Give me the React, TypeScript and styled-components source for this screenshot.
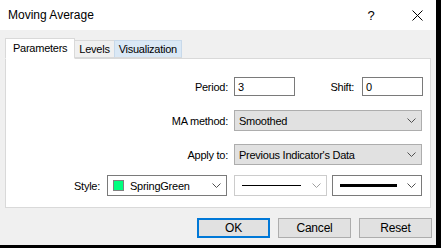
import React from 'react';
import styled, { createGlobalStyle } from 'styled-components';

const GlobalStyle = createGlobalStyle`
  html, body {
    margin: 0;
    padding: 0;
    background: #000;
  }
  body {
    font-family: 'Liberation Sans', Arial, sans-serif;
    font-size: 11px;
    color: #000;
  }
`;

const StyledScreen = styled.div({
  width: 441,
  height: 248,
  background: '#000',
  overflow: 'hidden',
});

const StyledWindow = styled.div({
  width: 436,
  height: 245,
  background: '#f0f0f0',
  display: 'flex',
  flexDirection: 'column',
});

const StyledTitleBar = styled.div({
  height: 30,
  background: '#fff',
  display: 'flex',
  alignItems: 'center',
  flexShrink: 0,
});

const StyledTitle = styled.div({
  flex: 1,
  paddingLeft: 8,
  paddingBottom: 1,
  fontSize: 12,
});

const StyledCaptionButton = styled.div<{ $width: number }>(({ $width }) => ({
  width: $width,
  height: 30,
  display: 'flex',
  alignItems: 'center',
  justifyContent: 'center',
  fontSize: 13,
}));

const StyledBody = styled.div({
  flex: 1,
  padding: '7px 5px 0 5px',
  display: 'flex',
  flexDirection: 'column',
  letterSpacing: '-0.25px',
});

const StyledTabs = styled.div({
  display: 'flex',
  alignItems: 'flex-end',
  height: 21,
  position: 'relative',
  zIndex: 1,
});

const StyledTab = styled.div<{ $active?: boolean; $hover?: boolean }>(({ $active, $hover }) => ({
  height: $active ? 21 : 18,
  padding: $active ? '0 7px 2px 7px' : '0 4px',
  display: 'flex',
  alignItems: 'center',
  boxSizing: 'border-box',
  background: $active ? '#fff' : $hover ? '#dae8f5' : '#f0f0f0',
  border: `1px solid ${$hover ? '#c8d9ea' : '#d9d9d9'}`,
  borderBottom: $active ? '1px solid #fff' : '1px solid #d9d9d9',
  marginLeft: $active ? 0 : -1,
  marginBottom: $active ? -1 : 0,
}));

const StyledPanel = styled.div({
  height: 150,
  background: '#fff',
  border: '1px solid #d9d9d9',
  boxSizing: 'border-box',
  paddingTop: 18,
  display: 'flex',
  flexDirection: 'column',
});

const StyledRow = styled.div<{ $gap: number }>(({ $gap }) => ({
  display: 'flex',
  alignItems: 'center',
  marginBottom: $gap,
}));

const StyledLabel = styled.div<{ $width: number; $space: number }>(({ $width, $space }) => ({
  width: $width,
  marginRight: $space,
  textAlign: 'right',
  flexShrink: 0,
}));

const StyledInput = styled.div({
  width: 61,
  height: 19,
  boxSizing: 'border-box',
  border: '1px solid #7a7a7a',
  background: '#fff',
  paddingLeft: 3,
  display: 'flex',
  alignItems: 'center',
});

const StyledSelect = styled.div({
  width: 188,
  height: 21,
  boxSizing: 'border-box',
  border: '1px solid #adadad',
  background: '#e1e1e1',
  paddingLeft: 4,
  paddingRight: 5,
  display: 'flex',
  alignItems: 'center',
});

const StyledSelectText = styled.div({
  flex: 1,
});

const StyledCombo = styled.div<{ $width: number; $space: number; $disabled?: boolean }>(
  ({ $width, $space, $disabled }) => ({
    width: $width,
    marginRight: $space,
    height: 21,
    boxSizing: 'border-box',
    border: `1px solid ${$disabled ? '#cccccc' : '#7a7a7a'}`,
    background: '#fff',
    display: 'flex',
    alignItems: 'center',
    paddingLeft: 5,
    paddingRight: 5,
    flexShrink: 0,
  }),
);

const StyledSwatch = styled.div({
  width: 11,
  height: 11,
  boxSizing: 'border-box',
  border: '1px solid #808080',
  background: '#00ff7f',
  marginRight: 6,
});

const StyledLine = styled.div<{ $weight: number; $length: number }>(({ $weight, $length }) => ({
  width: $length,
  height: $weight,
  background: '#000',
  marginLeft: 2,
}));

const StyledSpacer = styled.div({
  flex: 1,
});

const StyledButtonRow = styled.div({
  display: 'flex',
  justifyContent: 'flex-end',
  gap: 8,
  marginTop: 10,
  marginRight: -1,
});

const StyledButton = styled.div<{ $default?: boolean }>(({ $default }) => ({
  width: 73,
  height: 20,
  boxSizing: 'border-box',
  background: '#e1e1e1',
  border: $default ? '2px solid #0078d7' : '1px solid #adadad',
  display: 'flex',
  alignItems: 'center',
  justifyContent: 'center',
  fontSize: 12,
  letterSpacing: '-0.2px',
}));

const Chevron: React.FC<{ color?: string }> = ({ color = '#505050' }) => (
  <svg width="9" height="5" viewBox="0 0 9 5">
    <polyline points="0.5,0.5 4.5,4.5 8.5,0.5" fill="none" stroke={color} strokeWidth="1" />
  </svg>
);

const CloseIcon: React.FC = () => (
  <svg width="11" height="11" viewBox="0 0 11 11">
    <line x1="0.5" y1="0.5" x2="10.5" y2="10.5" stroke="#000" strokeWidth="1" />
    <line x1="10.5" y1="0.5" x2="0.5" y2="10.5" stroke="#000" strokeWidth="1" />
  </svg>
);

const App: React.FunctionComponent = () => (
  <StyledScreen>
    <GlobalStyle />
    <StyledWindow>
      <StyledTitleBar>
        <StyledTitle>Moving Average</StyledTitle>
        <StyledCaptionButton $width={54}>?</StyledCaptionButton>
        <StyledCaptionButton $width={38}>
          <CloseIcon />
        </StyledCaptionButton>
      </StyledTitleBar>
      <StyledBody>
        <StyledTabs>
          <StyledTab $active>Parameters</StyledTab>
          <StyledTab>Levels</StyledTab>
          <StyledTab $hover>Visualization</StyledTab>
        </StyledTabs>
        <StyledPanel>
          <StyledRow $gap={14}>
            <StyledLabel $width={222} $space={6}>Period:</StyledLabel>
            <StyledInput>3</StyledInput>
            <StyledLabel $width={59} $space={8}>Shift:</StyledLabel>
            <StyledInput>0</StyledInput>
          </StyledRow>
          <StyledRow $gap={13}>
            <StyledLabel $width={222} $space={6}>MA method:</StyledLabel>
            <StyledSelect>
              <StyledSelectText>Smoothed</StyledSelectText>
              <Chevron />
            </StyledSelect>
          </StyledRow>
          <StyledRow $gap={10}>
            <StyledLabel $width={222} $space={6}>Apply to:</StyledLabel>
            <StyledSelect>
              <StyledSelectText>Previous Indicator's Data</StyledSelectText>
              <Chevron />
            </StyledSelect>
          </StyledRow>
          <StyledRow $gap={0}>
            <StyledLabel $width={94} $space={7}>Style:</StyledLabel>
            <StyledCombo $width={120} $space={7}>
              <StyledSwatch />
              <StyledSelectText>SpringGreen</StyledSelectText>
              <Chevron />
            </StyledCombo>
            <StyledCombo $width={93} $space={5} $disabled>
              <StyledLine $weight={1} $length={59} />
              <StyledSpacer />
              <Chevron color="#a0a0a0" />
            </StyledCombo>
            <StyledCombo $width={90} $space={0}>
              <StyledLine $weight={3} $length={57} />
              <StyledSpacer />
              <Chevron />
            </StyledCombo>
          </StyledRow>
        </StyledPanel>
        <StyledButtonRow>
          <StyledButton $default>OK</StyledButton>
          <StyledButton>Cancel</StyledButton>
          <StyledButton>Reset</StyledButton>
        </StyledButtonRow>
      </StyledBody>
    </StyledWindow>
  </StyledScreen>
);

export default App;
